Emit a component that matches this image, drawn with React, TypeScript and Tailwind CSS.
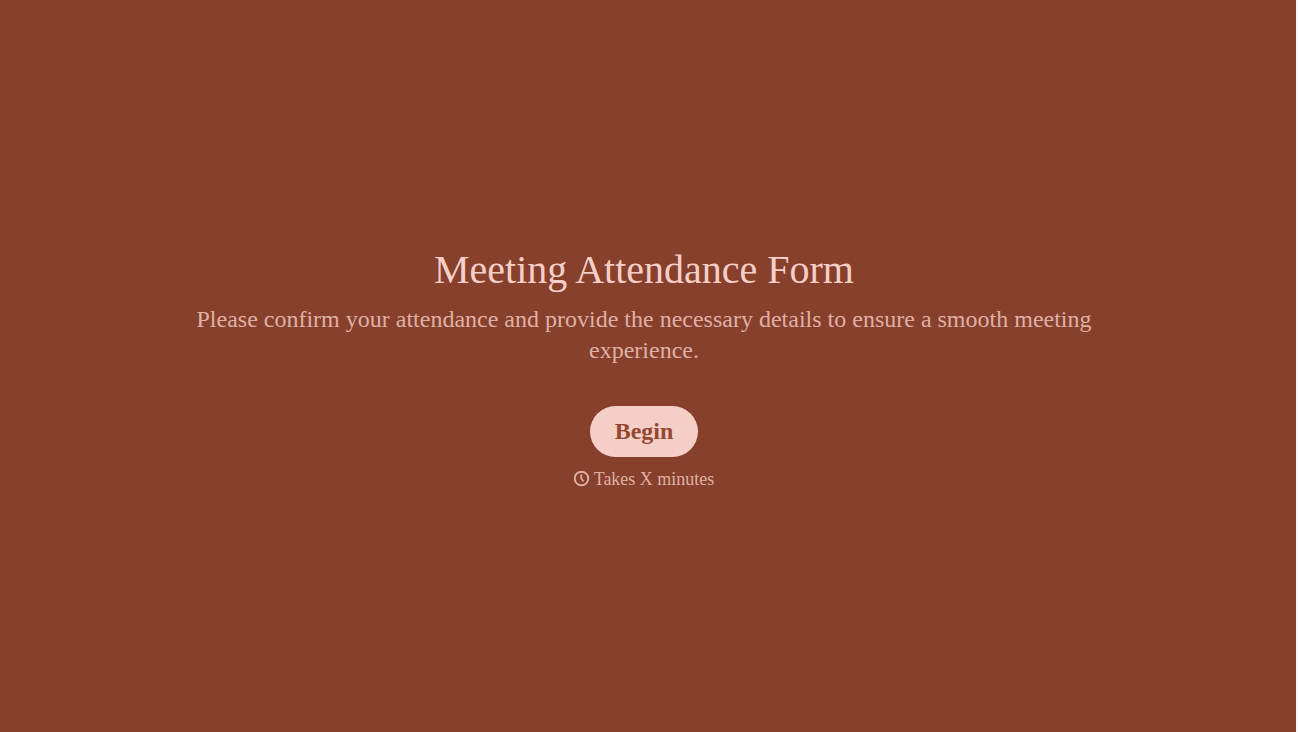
const ClockIcon = () => {
  return (
    <svg
      aria-hidden="true"
      viewBox="0 0 16 16"
      fill="none"
      stroke="currentColor"
      className="size-4"
    >
      <circle cx="7.5" cy="7.5" r="6.8" strokeWidth="1.9" />
      <path d="M7.3 3.5v4l2.2 3" strokeWidth="1.7" />
    </svg>
  );
};

const App = () => {
  return (
    <div className="min-h-screen bg-[#f8f8fc] pr-0.5">
      <main className="min-h-screen flex flex-col items-center justify-center bg-[#87402c] pt-0.5 pl-48 pr-[200px] font-['Liberation_Serif',serif] text-center">
        <h1 className="text-[40px] leading-14 text-[#f5cfc7]">
          Meeting Attendance Form
        </h1>
        <p className="mt-1.5 text-2xl leading-[31px] text-[#dfb0a5]">
          Please confirm your attendance and provide the necessary details to
          ensure a smooth meeting experience.
        </p>
        <button
          type="button"
          className="mt-10 h-[51px] px-[25px] rounded-full bg-[#f5cfc7] text-2xl font-bold text-[#934832]"
        >
          Begin
        </button>
        <div className="mt-2 flex items-center gap-1 text-lg leading-7 text-[#dfb0a5]">
          <ClockIcon />
          <span>Takes X minutes</span>
        </div>
      </main>
    </div>
  );
};

export default App;
